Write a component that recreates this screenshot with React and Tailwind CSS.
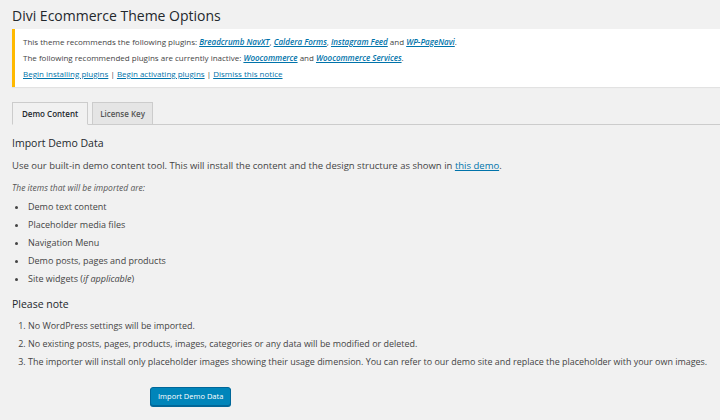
const font = { fontFamily: '"Open Sans", "Noto Sans", sans-serif' };

const items = [
  'Demo text content',
  'Placeholder media files',
  'Navigation Menu',
  'Demo posts, pages and products',
];

const notes = [
  'No WordPress settings will be imported.',
  'No existing posts, pages, products, images, categories or any data will be modified or deleted.',
  'The importer will install only placeholder images showing their usage dimension. You can refer to our demo site and replace the placeholder with your own images.',
];

function A({ children, italic }) {
  return (
    <a href="#" className={`text-[#0073aa] underline ${italic ? 'italic font-semibold' : ''}`}>
      {children}
    </a>
  );
}

export default function App() {
  return (
    <div className="w-[720px] h-[420px] overflow-hidden bg-[#f1f1f1] text-[#444]" style={font}>
      <h1 className="pl-3 pt-[5px] text-[14px] leading-[22px] text-[#23282d]">Divi Ecommerce Theme Options</h1>

      {/* Notice */}
      <div className="mt-[2px] ml-3 bg-white border-l-[3px] border-[#ffb900] shadow-[0_1px_1px_rgba(0,0,0,0.06)] pl-2 pt-[5px] pb-[5px] text-[8px] leading-[16px]">
        <p>
          This theme recommends the following plugins: <A italic>Breadcrumb NavXT</A>, <A italic>Caldera Forms</A>,{' '}
          <A italic>Instagram Feed</A> and <A italic>WP-PageNavi</A>.
        </p>
        <p>
          The following recommended plugins are currently inactive: <A italic>Woocommerce</A> and{' '}
          <A italic>Woocommerce Services</A>.
        </p>
        <p>
          <A>Begin installing plugins</A> | <A>Begin activating plugins</A> | <A>Dismiss this notice</A>
        </p>
      </div>

      {/* Tabs */}
      <div className="mt-[15px] ml-3 flex items-end gap-[4px] border-b border-[#ccc]">
        <div className="-mb-px border border-[#ccc] border-b-[#f1f1f1] bg-[#f1f1f1] px-[9px] h-[23px] flex items-center text-[8px] font-semibold text-[#23282d]">
          Demo Content
        </div>
        <div className="border border-[#ccc] border-b-0 bg-[#e5e5e5] px-[7px] h-[22px] flex items-center text-[8px] font-semibold text-[#555]">
          License Key
        </div>
      </div>

      <div className="pl-3">
        <h2 className="mt-[10px] text-[10.5px] leading-[16px] text-[#23282d]">Import Demo Data</h2>
        <p className="mt-[8px] text-[9.5px] leading-[14px]">
          Use our built-in demo content tool. This will install the content and the design structure as shown in{' '}
          <a href="#" className="text-[#0073aa] underline">this demo</a>.
        </p>
        <p className="mt-[9px] text-[8.5px] leading-[12px] italic text-[#555]">The items that will be imported are:</p>

        <ul className="mt-[4px] pl-[16px] list-disc text-[9px] leading-[18px]">
          {items.map((t) => (
            <li key={t}>{t}</li>
          ))}
          <li>
            Site widgets (<i>if applicable</i>)
          </li>
        </ul>

        <h2 className="mt-[8px] text-[10.5px] leading-[16px] text-[#23282d]">Please note</h2>
        <ol className="mt-[5px] pl-[16px] list-decimal text-[8.95px] leading-[18px]">
          {notes.map((t) => (
            <li key={t}>{t}</li>
          ))}
        </ol>

        <div className="mt-[10px] pl-[138px]">
          <button className="h-[19px] px-[7px] rounded-[3px] bg-[#0085ba] border border-[#006799] text-white text-[7.5px] shadow-[0_1px_0_#006799]">
            Import Demo Data
          </button>
        </div>
      </div>
    </div>
  );
}
